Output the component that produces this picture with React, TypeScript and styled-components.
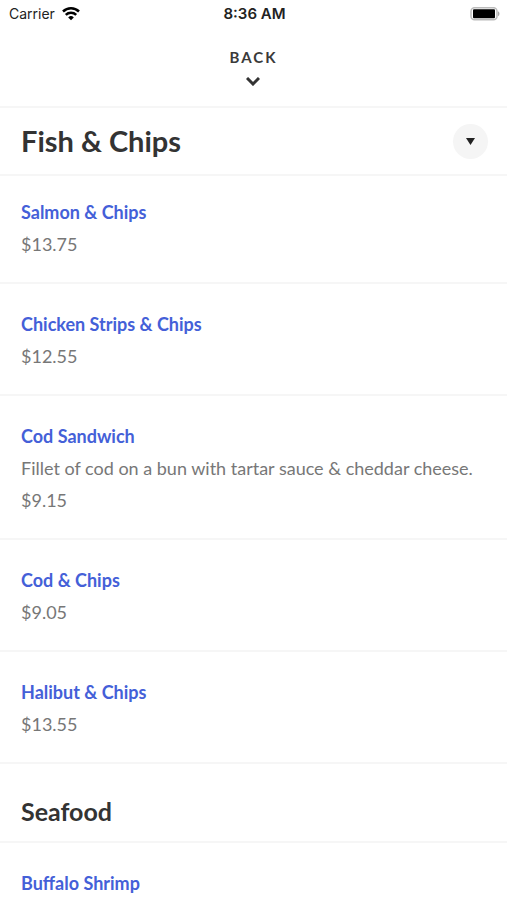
import React from "react";
import styled, { createGlobalStyle } from "styled-components";

const Global = createGlobalStyle`
  * { box-sizing: border-box; }
  body { margin: 0; background: #fff; font-family: Lato, sans-serif; color: #333; }
`;
const Page = styled.div`
  max-height: 100vh;
  overflow: hidden;
`;
const StatusBar = styled.div`
  display: grid;
  grid-template-columns: 1fr auto 1fr;
  align-items: center;
  height: 28px;
  padding: 0 7px 0 9px;
  font: 14px/20px Inter, sans-serif;
  color: #222;
`;
const Carrier = styled.div`
  display: flex;
  align-items: center;
  gap: 7px;
`;
const Time = styled.time`
  font-size: 15px;
  font-weight: 600;
`;
const Battery = styled.svg`
  justify-self: end;
`;
const Header = styled.header`
  display: flex;
  justify-content: center;
  height: 80px;
  padding-top: 19px;
  border-bottom: 2px solid #f6f6f6;
`;
const BackButton = styled.button`
  display: flex;
  flex-direction: column;
  align-items: center;
  align-self: flex-start;
  gap: 10px;
  padding: 0;
  border: 0;
  background: none;
  color: #3a3a3a;
  font: 700 15px/20px Lato, sans-serif;
  letter-spacing: 2px;
`;
const TitleRow = styled.div`
  display: flex;
  align-items: center;
  justify-content: space-between;
  height: 68px;
  padding: 0 19px 0 21px;
  border-bottom: 2px solid #f6f6f6;
`;
const Title = styled.h1`
  margin: 0;
  font: 700 29px/36px Lato, sans-serif;
`;
const RoundButton = styled.button`
  display: grid;
  place-items: center;
  width: 35px;
  height: 35px;
  padding: 0;
  border: 0;
  border-radius: 50%;
  background: #f5f5f5;
`;
const Menu = styled.ul`
  margin: 0;
  padding: 0;
  list-style: none;
`;
const Item = styled.li`
  padding: 24px 21px 22px;
  border-bottom: 2px solid #f6f6f6;
  font-size: 18px;
  line-height: 32px;
  color: #777;

  ${TitleRow} + ${Menu} > &:first-child {
    padding-top: 20px;
  }
`;
const ItemLink = styled.a`
  display: block;
  color: #4460d8;
  font-weight: 700;
  text-decoration: none;
`;
const Text = styled.p`
  margin: 0;
`;
const SectionTitle = styled.h2`
  margin: 0;
  padding: 31px 21px 14px;
  border-bottom: 2px solid #f6f6f6;
  font: 700 25px/32px Lato, sans-serif;
`;

type Dish = { name: string; price: string; description?: string };
const fish: Dish[] = [
  { name: "Salmon & Chips", price: "$13.75" },
  { name: "Chicken Strips & Chips", price: "$12.55" },
  { name: "Cod Sandwich", description: "Fillet of cod on a bun with tartar sauce & cheddar cheese.", price: "$9.15" },
  { name: "Cod & Chips", price: "$9.05" },
  { name: "Halibut & Chips", price: "$13.55" },
];

function DishRow({ dish }: { dish: Dish }) {
  return (
    <Item>
      <ItemLink href="#">{dish.name}</ItemLink>
      {dish.description && <Text>{dish.description}</Text>}
      {dish.price && <Text>{dish.price}</Text>}
    </Item>
  );
}

export default function App() {
  return (
    <Page>
      <Global />
      <StatusBar>
        <Carrier>
          Carrier
          <svg width="18" height="14" viewBox="0 0 18 14" fill="none" stroke="#000" strokeWidth="2.5" aria-hidden="true">
            <path d="M1 4.500a11.500 11.500 0 0 1 16 0M3.800 7.900a7.400 7.400 0 0 1 10.400 0" />
            <path d="M9 13.200 6.200 10.400a4 4 0 0 1 5.600 0z" fill="#000" stroke="none" />
          </svg>
        </Carrier>
        <Time>8:36 AM</Time>
        <Battery width="30" height="14" viewBox="0 0 30 14" aria-hidden="true">
          <rect x="1" y="0.700" width="26" height="12" rx="3.500" fill="#fff" stroke="#bbb" strokeWidth="1.500" />
          <rect x="3" y="2.200" width="22" height="9" rx="1" fill="#000" />
          <path d="M28 4.200c2 1 2 4 0 5z" fill="#aaa" />
        </Battery>
      </StatusBar>
      <Header>
        <BackButton>
          BACK
          <svg width="14" height="9" viewBox="0 0 14 9" fill="none" stroke="#333" strokeWidth="3" aria-hidden="true">
            <path d="m1 1 6 6 6-6" />
          </svg>
        </BackButton>
      </Header>
      <TitleRow>
        <Title>Fish &amp; Chips</Title>
        <RoundButton aria-label="Choose a category">
          <svg width="9" height="7" viewBox="0 0 9 7" fill="#222" aria-hidden="true"><path d="M0 0h9L4.500 7z" /></svg>
        </RoundButton>
      </TitleRow>
      <Menu>{fish.map((d) => <DishRow key={d.name} dish={d} />)}</Menu>
      <SectionTitle>Seafood</SectionTitle>
      <Menu><DishRow dish={{ name: "Buffalo Shrimp", price: "" }} /></Menu>
    </Page>
  );
}
